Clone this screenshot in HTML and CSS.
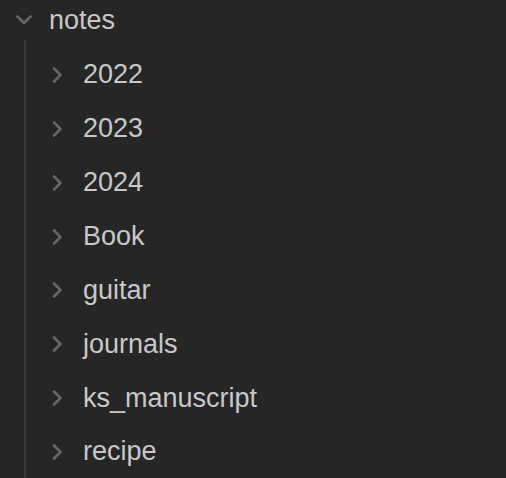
FILE: index.html
```html
<!DOCTYPE html>
<html>
<head>
<meta charset="utf-8">
<link rel="stylesheet" href="styles.css">
</head>
<body>
<div class="tree">
  <div class="row root">
    <svg class="chev down" viewBox="0 0 16 10" width="16" height="10"><path d="M1.5 1.5 L8 8 L14.5 1.5" fill="none" stroke="currentColor" stroke-width="2.6" stroke-linecap="round" stroke-linejoin="round"/></svg>
    <span class="label">notes</span>
  </div>
  <div class="children">
    <div class="row"><svg class="chev" viewBox="0 0 10 16" width="10" height="16"><path d="M2 1.5 L8.5 8 L2 14.5" fill="none" stroke="currentColor" stroke-width="2.6" stroke-linecap="round" stroke-linejoin="round"/></svg><span class="label">2022</span></div>
    <div class="row"><svg class="chev" viewBox="0 0 10 16" width="10" height="16"><path d="M2 1.5 L8.5 8 L2 14.5" fill="none" stroke="currentColor" stroke-width="2.6" stroke-linecap="round" stroke-linejoin="round"/></svg><span class="label">2023</span></div>
    <div class="row"><svg class="chev" viewBox="0 0 10 16" width="10" height="16"><path d="M2 1.5 L8.5 8 L2 14.5" fill="none" stroke="currentColor" stroke-width="2.6" stroke-linecap="round" stroke-linejoin="round"/></svg><span class="label">2024</span></div>
    <div class="row"><svg class="chev" viewBox="0 0 10 16" width="10" height="16"><path d="M2 1.5 L8.5 8 L2 14.5" fill="none" stroke="currentColor" stroke-width="2.6" stroke-linecap="round" stroke-linejoin="round"/></svg><span class="label">Book</span></div>
    <div class="row"><svg class="chev" viewBox="0 0 10 16" width="10" height="16"><path d="M2 1.5 L8.5 8 L2 14.5" fill="none" stroke="currentColor" stroke-width="2.6" stroke-linecap="round" stroke-linejoin="round"/></svg><span class="label">guitar</span></div>
    <div class="row"><svg class="chev" viewBox="0 0 10 16" width="10" height="16"><path d="M2 1.5 L8.5 8 L2 14.5" fill="none" stroke="currentColor" stroke-width="2.6" stroke-linecap="round" stroke-linejoin="round"/></svg><span class="label">journals</span></div>
    <div class="row"><svg class="chev" viewBox="0 0 10 16" width="10" height="16"><path d="M2 1.5 L8.5 8 L2 14.5" fill="none" stroke="currentColor" stroke-width="2.6" stroke-linecap="round" stroke-linejoin="round"/></svg><span class="label">ks_manuscript</span></div>
    <div class="row"><svg class="chev" viewBox="0 0 10 16" width="10" height="16"><path d="M2 1.5 L8.5 8 L2 14.5" fill="none" stroke="currentColor" stroke-width="2.6" stroke-linecap="round" stroke-linejoin="round"/></svg><span class="label">recipe</span></div>
  </div>
</div>
</body>
</html>
```

FILE: styles.css
```css
html, body {
  margin: 0;
  padding: 0;
  background: #262626;
  height: 100%;
  overflow: hidden;
}
body {
  font-family: "Liberation Sans", Arial, sans-serif;
  color: #c8c8c8;
}
.tree {
  display: flex;
  flex-direction: column;
  height: 100%;
}
.row {
  display: flex;
  align-items: center;
  height: 53.86px;
  font-size: 27px;
  flex: none;
}
.row.root {
  height: 40px;
  padding-left: 16px;
}
.root .label {
  margin-left: 17px;
}
.chev {
  color: #666666;
  flex: none;
}
.children {
  flex: 1;
  min-height: 0;
  overflow: hidden;
  margin-left: 24px;
  padding-top: 8px;
  border-left: 2px solid #3a3a3a;
  padding-left: 26px;
  display: flex;
  flex-direction: column;
}
.children .label {
  margin-left: 21px;
}
.label {
  line-height: 1;
}
```
